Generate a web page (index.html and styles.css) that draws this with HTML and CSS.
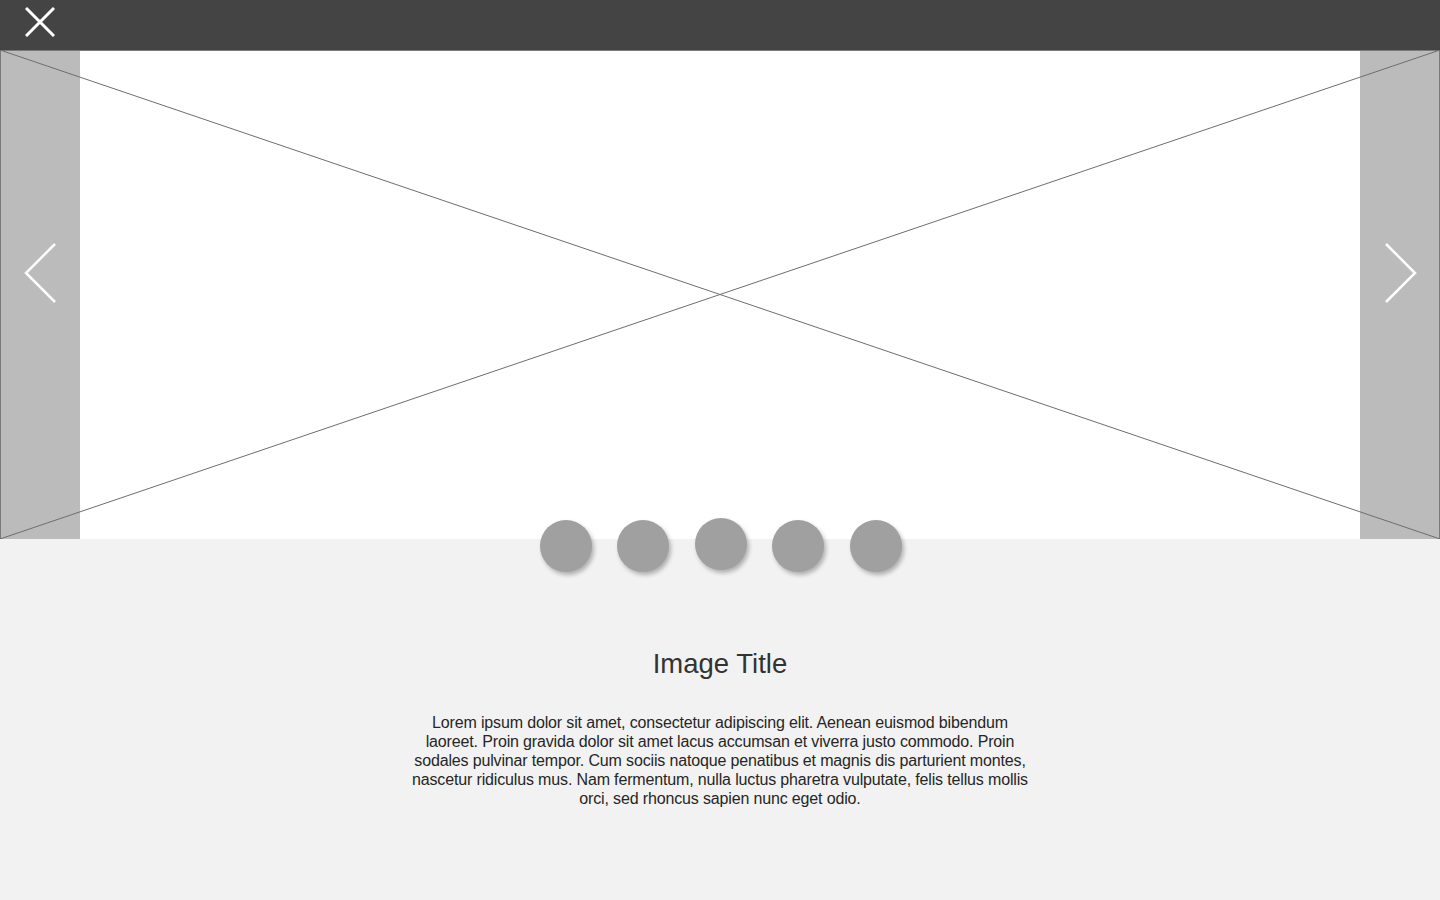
FILE: index.html
```html
<!DOCTYPE html>
<html lang="en">
<head>
<meta charset="utf-8">
<title>Lightbox</title>
<link rel="stylesheet" href="styles.css">
</head>
<body>
<div class="page">
  <header class="topbar">
    <button class="close" aria-label="Close">
      <svg width="30" height="30" viewBox="0 0 30 30"><path d="M1 1 L29 29 M29 1 L1 29" stroke="#fff" stroke-width="3" fill="none"/></svg>
    </button>
  </header>
  <section class="stage">
    <svg class="cross" viewBox="0 0 100 100" preserveAspectRatio="none"><path d="M0 0 L100 100 M100 0 L0 100" stroke="#6e6e6e" stroke-width="1" vector-effect="non-scaling-stroke" fill="none"/></svg>
    <div class="side">
      <svg width="34" height="62" viewBox="0 0 34 62"><path d="M31 2 L2 31 L31 60" stroke="#fff" stroke-width="2.5" fill="none"/></svg>
    </div>
    <div class="image"></div>
    <div class="side">
      <svg width="34" height="62" viewBox="0 0 34 62"><path d="M3 2 L32 31 L3 60" stroke="#fff" stroke-width="2.5" fill="none"/></svg>
    </div>
  </section>
  <section class="info">
    <div class="dots">
      <span class="dot"></span>
      <span class="dot"></span>
      <span class="dot active"></span>
      <span class="dot"></span>
      <span class="dot"></span>
    </div>
    <h1 class="title">Image Title</h1>
    <p class="desc">Lorem ipsum dolor sit amet, consectetur adipiscing elit. Aenean euismod bibendum laoreet. Proin gravida dolor sit amet lacus accumsan et viverra justo commodo. Proin sodales pulvinar tempor. Cum sociis natoque penatibus et magnis dis parturient montes, nascetur ridiculus mus. Nam fermentum, nulla luctus pharetra vulputate, felis tellus mollis orci, sed rhoncus sapien nunc eget odio.</p>
  </section>
</div>
</body>
</html>
```
FILE: styles.css
```css
* { box-sizing: border-box; }
html, body { margin: 0; padding: 0; }
body {
  font-family: "Liberation Sans", Arial, sans-serif;
  background: #f2f2f2;
  width: 1440px;
  height: 900px;
  overflow: hidden;
}
.page { display: flex; flex-direction: column; height: 900px; }
.topbar {
  height: 50px;
  background: #444444;
  display: flex;
  align-items: flex-start;
  padding: 7px 0 0 25px;
}
.close {
  border: 0;
  background: none;
  padding: 0;
  width: 30px;
  height: 30px;
  display: block;
}
.close svg { display: block; }
.stage {
  position: relative;
  height: 489px;
  display: flex;
  border-top: 1px solid #7a7a7a;
  border-left: 1px solid #7a7a7a;
  border-right: 1px solid #7a7a7a;
  background: #fff;
}
.cross {
  position: absolute;
  left: -1px;
  top: -1px;
  width: 1440px;
  height: 489px;
  pointer-events: none;
  z-index: 2;
}
.side {
  width: 79px;
  background: #bbbbbb;
  display: flex;
  align-items: center;
  justify-content: center;
  padding-bottom: 44px;
}
.side svg { display: block; }
.image { flex: 1; background: #fff; }
.info {
  flex: 1;
  background: #f2f2f2;
  display: flex;
  flex-direction: column;
  align-items: center;
}
.dots {
  display: flex;
  gap: 25.5px;
  margin-top: -19px;
  height: 52px;
  align-items: flex-start;
  position: relative;
  z-index: 3;
  padding-left: 1px;
}
.dot {
  width: 52px;
  height: 52px;
  border-radius: 50%;
  background: #a0a0a0;
  box-shadow: 2px 3px 4px rgba(0,0,0,0.28);
}
.dot.active { margin-top: -2px; }
.title {
  margin: 77px 0 0;
  font-size: 27.5px;
  line-height: 30px;
  font-weight: normal;
  color: #333333;
}
.desc {
  margin: 34px 0 0;
  width: 620px;
  text-align: center;
  font-size: 16px;
  letter-spacing: -0.15px;
  line-height: 19px;
  color: #262626;
}
```
